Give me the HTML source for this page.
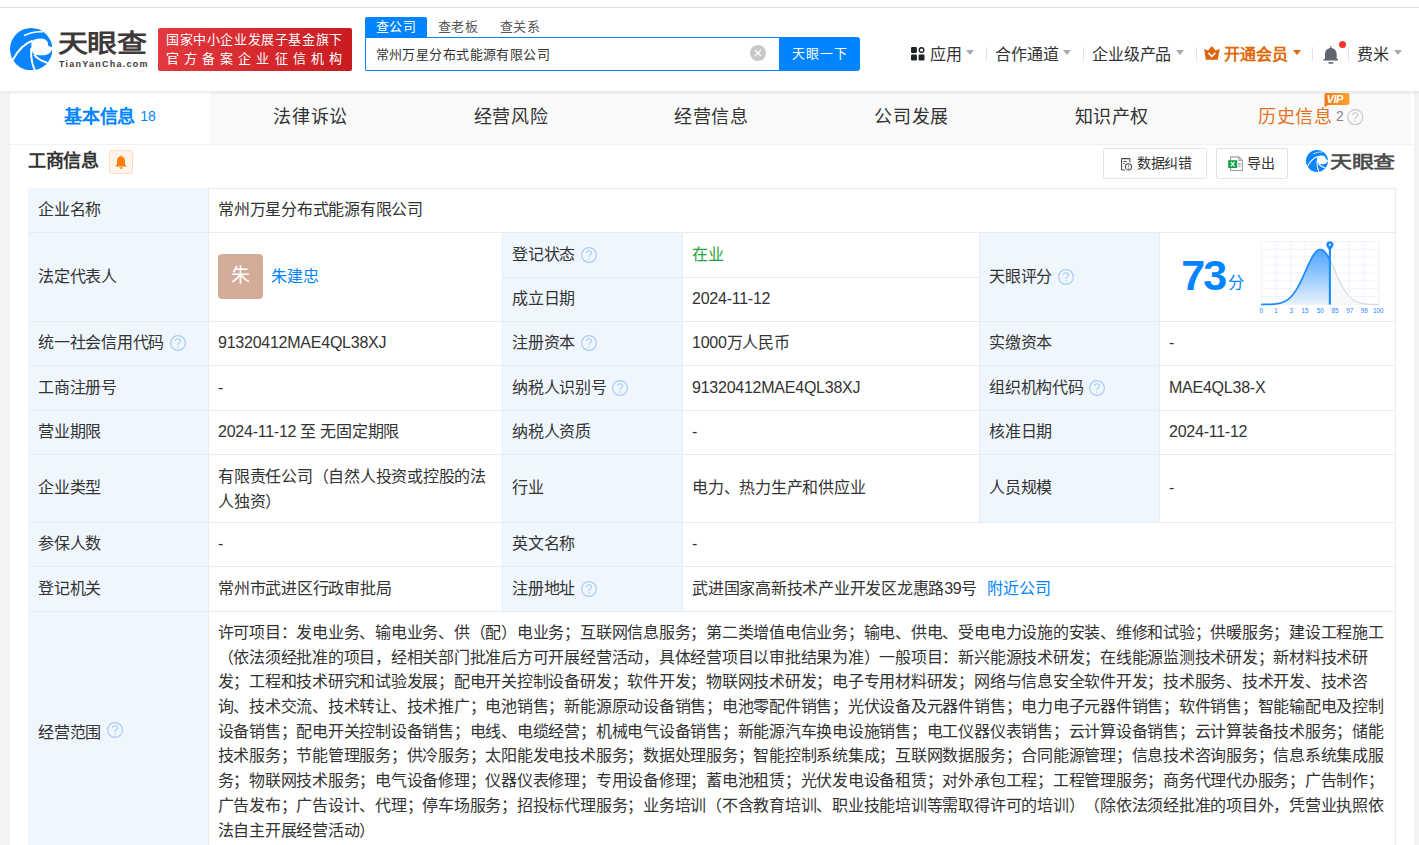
<!DOCTYPE html>
<html lang="zh-CN"><head><meta charset="utf-8">
<style>
*{box-sizing:border-box;margin:0;padding:0}
html,body{text-spacing-trim:space-all;width:1419px;height:845px;overflow:hidden;background:#f4f4f4;font-family:"Liberation Sans",sans-serif;color:#333}
.abs{position:absolute}
#top{position:absolute;left:0;top:0;width:1419px;height:8px;background:#fff;border-bottom:1px solid #e3e3e3}
#hdr{position:absolute;left:0;top:8px;width:1419px;height:83px;background:#fff;box-shadow:0 1px 4px rgba(0,0,0,.06);z-index:2}
#card{position:absolute;left:10px;top:91px;width:1404px;height:800px;background:#fff;box-shadow:0 0 1px rgba(0,0,0,.12)}
#tabs{position:absolute;left:10px;top:91px;width:1401px;height:53px;background:#f9f9f9}
.tab{position:absolute;top:0;height:53px;width:200.3px;text-align:center;font-size:19px;letter-spacing:-0.3px;line-height:51px;color:#333}
.cell{position:absolute}
.vl{position:absolute;width:1px;background:#e3edf6}
.hl{position:absolute;height:1px;background:#e3edf6}
.ci{position:absolute;left:0;top:0;right:0;bottom:0;display:flex;align-items:center;padding-bottom:0;font-size:16px;line-height:20px;letter-spacing:-0.24px;color:#333}
.scope{position:absolute;white-space:nowrap;overflow:hidden;padding:10px 10px 0 9.5px;font-size:16px;letter-spacing:-0.24px;line-height:24.68px;color:#333}
.qi{display:inline-block;width:16px;height:16px;margin-left:5.5px;position:relative;top:0}
.lk{color:#0084ff}
.av{display:inline-block;width:45px;height:45px;border-radius:4px;background:#d3ab99;color:#fff;text-align:center;line-height:44px;font-size:19px}
</style></head><body>
<div id="top"></div>
<div id="hdr"></div>

<div class="abs" style="left:9.8px;top:27.8px;width:42.4px;height:42.4px;z-index:3">
<svg width="42.4" height="42.4" viewBox="0 0 100 100">
<circle cx="50" cy="50" r="50" fill="#0a84ff"/>
<path d="M51,31 C60,24 74,23 83,27 C89,31 91,36 89,41 L100,46 C99,56 92,62 84,63.5 C75,65 64,65 57,62 C52,58 50,52 50,45 Z" fill="#fff"/>
<path d="M6,76 C18,54 34,36 53,30" stroke="#fff" stroke-width="4.6" fill="none"/>
<path d="M50,48 C49,70 52,86 59,100" stroke="#fff" stroke-width="4.6" fill="none"/>
<path d="M57,63 C64,72 76,79 88,82" stroke="#fff" stroke-width="4.8" fill="none"/>
<path d="M33,18 C46,11 62,8 78,9" stroke="#fff" stroke-width="3.2" fill="none"/>
</svg></div>
<div class="abs" style="left:58px;top:31px;font-size:30px;line-height:30px;font-weight:bold;color:#3f3a3a;letter-spacing:-0.6px;transform:scaleY(0.82);transform-origin:0 0;z-index:3">天眼查</div>
<div class="abs" style="left:59px;top:58.5px;font-size:9px;line-height:10px;font-weight:bold;color:#3f3a3a;letter-spacing:1.25px;z-index:3">TianYanCha.com</div>
<div class="abs" style="left:158px;top:28px;width:194px;height:43px;border-radius:2px;background:linear-gradient(100deg,#e3393f,#c91b1f);z-index:3"></div>
<div class="abs" style="left:166px;top:33.2px;font-size:13px;line-height:13px;color:#fff;letter-spacing:0.6px;z-index:3">国家中小企业发展子基金旗下</div>
<div class="abs" style="left:166px;top:52px;font-size:13px;line-height:13px;color:#fff;letter-spacing:5.1px;z-index:3">官方备案企业征信机构</div>
<div class="abs" style="left:365px;top:17px;width:62px;height:21px;border-radius:2px 2px 0 0;background:#0084ff;z-index:3"></div>
<div class="abs" style="left:375.5px;top:20.4px;font-size:13px;line-height:13px;color:#fff;letter-spacing:0.5px;z-index:3">查公司</div>
<div class="abs" style="left:437.5px;top:20.4px;font-size:13px;line-height:13px;color:#555;letter-spacing:0.5px;z-index:3">查老板</div>
<div class="abs" style="left:499.5px;top:20.4px;font-size:13px;line-height:13px;color:#555;letter-spacing:0.5px;z-index:3">查关系</div>
<div class="abs" style="left:365px;top:37px;width:416px;height:34px;border:1px solid #0084ff;border-radius:0 0 0 2px;background:#fff;z-index:3"></div>
<div class="abs" style="left:375.5px;top:47.5px;font-size:13px;line-height:13px;color:#333;letter-spacing:0.44px;z-index:3">常州万星分布式能源有限公司</div>
<div class="abs" style="left:750px;top:45px;width:16px;height:16px;border-radius:50%;background:#c8c8c8;z-index:3">
<svg width="16" height="16" viewBox="0 0 16 16" style="position:absolute;left:0;top:0"><path d="M5,5 L11,11 M11,5 L5,11" stroke="#fff" stroke-width="1.3"/></svg></div>
<div class="abs" style="left:779px;top:37px;width:81px;height:34px;border-radius:0 3px 3px 0;background:#0084ff;z-index:3"></div>
<div class="abs" style="left:791.5px;top:46.6px;font-size:13px;line-height:13px;color:#fff;letter-spacing:1.1px;z-index:3">天眼一下</div>
<div class="abs" style="left:911px;top:47px;width:13.6px;height:13.6px;z-index:3"><svg width="13.6" height="13.6" viewBox="0 0 13.6 13.6"><rect x="0" y="0" width="5.9" height="5.9" rx="1.2" fill="#1d2128"/><rect x="0" y="7.6" width="5.9" height="5.9" rx="1.2" fill="#1d2128"/><rect x="7.6" y="7.6" width="5.9" height="5.9" rx="1.2" fill="#1d2128"/><circle cx="10.55" cy="2.95" r="2.25" fill="none" stroke="#1d2128" stroke-width="1.4"/></svg></div>
<div class="abs" style="left:930px;top:47px;font-size:16px;line-height:16px;color:#333;letter-spacing:-0.15px;z-index:3">应用</div><div class="abs" style="left:966px;top:50px;width:0;height:0;border-left:4.5px solid transparent;border-right:4.5px solid transparent;border-top:5px solid #aaa;z-index:3"></div><div class="abs" style="left:986px;top:47px;width:1px;height:14px;background:#e1e4e8;z-index:3"></div><div class="abs" style="left:995px;top:47px;font-size:16px;line-height:16px;color:#333;letter-spacing:-0.15px;z-index:3">合作通道</div><div class="abs" style="left:1063px;top:50px;width:0;height:0;border-left:4.5px solid transparent;border-right:4.5px solid transparent;border-top:5px solid #aaa;z-index:3"></div><div class="abs" style="left:1083px;top:47px;width:1px;height:14px;background:#e1e4e8;z-index:3"></div><div class="abs" style="left:1092px;top:47px;font-size:16px;line-height:16px;color:#333;letter-spacing:-0.15px;z-index:3">企业级产品</div><div class="abs" style="left:1176px;top:50px;width:0;height:0;border-left:4.5px solid transparent;border-right:4.5px solid transparent;border-top:5px solid #aaa;z-index:3"></div><div class="abs" style="left:1195.5px;top:47px;width:1px;height:14px;background:#e1e4e8;z-index:3"></div><div class="abs" style="left:1203.9px;top:46px;width:16px;height:14px;z-index:3"><svg width="16" height="14" viewBox="0 0 16 14"><path d="M0.2,3.1 L4,4.6 L7.8,0.1 L11.6,4.6 L15.7,3.1 L13.7,13.8 L1.8,13.8 Z" fill="#dc640c"/><path d="M4.4,6.8 L7.8,10.5 L11.4,6.8" stroke="#fff" stroke-width="1.6" fill="none"/></svg></div><div class="abs" style="left:1224px;top:47px;font-size:16px;line-height:16px;color:#e0690b;letter-spacing:-0.15px;font-weight:bold;z-index:3">开通会员</div><div class="abs" style="left:1292.5px;top:50px;width:0;height:0;border-left:4.5px solid transparent;border-right:4.5px solid transparent;border-top:5px solid #e0690b;z-index:3"></div><div class="abs" style="left:1312px;top:47px;width:1px;height:14px;background:#e1e4e8;z-index:3"></div><div class="abs" style="left:1322.5px;top:46px;width:15.5px;height:18px;z-index:3"><svg width="15.5" height="18" viewBox="0 0 15.5 18"><path d="M7.3,0 L8.4,0 L8.4,1.9 C11.5,2.3 13.7,4.8 13.7,8.2 L13.7,12.9 L15.3,12.9 L15.3,14.5 L0.3,14.5 L0.3,12.9 L2,12.9 L2,8.2 C2,4.8 4.2,2.3 7.3,1.9 Z" fill="#5f6670"/><rect x="5.5" y="16.1" width="4.7" height="1.6" fill="#5f6670"/></svg></div><div class="abs" style="left:1338.9px;top:40.8px;width:7px;height:7px;border-radius:50%;background:#ff3430;z-index:3"></div><div class="abs" style="left:1348px;top:47px;width:1px;height:14px;background:#e1e4e8;z-index:3"></div><div class="abs" style="left:1357px;top:47px;font-size:16px;line-height:16px;color:#333;letter-spacing:-0.15px;z-index:3">费米</div><div class="abs" style="left:1394px;top:50px;width:0;height:0;border-left:4.5px solid transparent;border-right:4.5px solid transparent;border-top:5px solid #aaa;z-index:3"></div>
<div id="card"></div>
<div id="tabs"></div>
<div class="abs" style="left:10px;top:91px;width:199.5px;height:53px;background:#fff"></div>
<div class="abs" style="left:10px;top:144px;width:1402px;height:1px;background:#f2f2f2"></div>
<div class="abs" style="left:10px;top:91px;width:1409px;height:4px;background:linear-gradient(rgba(0,0,0,0.045),rgba(0,0,0,0))"></div>
<div class="abs tt" style="left:64.3px;top:108.2px;font-size:18px;line-height:18px;font-weight:bold;letter-spacing:-0.3px;color:#0084ff">基本信息</div>
<div class="abs tt" style="left:140.3px;top:109px;font-size:14px;line-height:14px;color:#0084ff">18</div>
<div class="abs tt" style="left:273.45px;top:108.25px;font-size:18px;line-height:18px;letter-spacing:0.6px;color:#333">法律诉讼</div><div class="abs tt" style="left:473.75px;top:108.25px;font-size:18px;line-height:18px;letter-spacing:0.6px;color:#333">经营风险</div><div class="abs tt" style="left:674.05px;top:108.25px;font-size:18px;line-height:18px;letter-spacing:0.6px;color:#333">经营信息</div><div class="abs tt" style="left:874.35px;top:108.25px;font-size:18px;line-height:18px;letter-spacing:0.6px;color:#333">公司发展</div><div class="abs tt" style="left:1074.65px;top:108.25px;font-size:18px;line-height:18px;letter-spacing:0.6px;color:#333">知识产权</div>
<div class="abs tt" style="left:1258px;top:108.25px;font-size:18px;line-height:18px;letter-spacing:0.6px;color:#e5731b">历史信息</div>
<div class="abs tt" style="left:1336px;top:110px;font-size:13.8px;line-height:14px;color:#858585">2</div>
<svg class="abs" style="left:1347.3px;top:108.8px" width="16.4" height="16.4" viewBox="0 0 16 16"><circle cx="8" cy="8" r="7.4" fill="none" stroke="#c4cad0" stroke-width="1.2"/><path d="M5.5,6.1 C5.5,4.6 6.6,3.7 8,3.7 C9.4,3.7 10.5,4.6 10.5,5.9 C10.5,7.1 9.6,7.6 8.9,8.1 C8.2,8.6 8,9 8,9.9" fill="none" stroke="#c4cad0" stroke-width="1.1"/><circle cx="8" cy="12" r="0.75" fill="#c4cad0"/></svg>
<svg class="abs" style="left:1323.5px;top:92.8px" width="26" height="14.5" viewBox="0 0 26 14.5"><defs><linearGradient id="vg" x1="0" y1="0" x2="1" y2="0"><stop offset="0" stop-color="#f07910"/><stop offset="1" stop-color="#ffa335"/></linearGradient></defs><path d="M2,0 L23.5,0 Q25.5,0 25.5,2 L25.5,10 Q25.5,12 23.5,12 L4,12 L1,14.2 L0.5,12 L0.5,2 Q0.5,0 2,0 Z" fill="url(#vg)"/></svg>
<div class="abs" style="left:1326.5px;top:94px;font-size:11px;line-height:11px;font-weight:bold;font-style:italic;color:#fff;letter-spacing:-0.4px">VIP</div>

<div class="abs" style="left:28px;top:152px;font-size:18px;line-height:18px;font-weight:bold;color:#333;letter-spacing:-0.3px">工商信息</div>
<div class="abs" style="left:109px;top:149.5px;width:24px;height:24px;border:1px solid #ffdcc2;border-radius:3px;background:#fff4ea">
<svg width="22" height="22" viewBox="0 0 22 22" style="position:absolute;left:0;top:0"><path d="M11,4.6 C11.4,4.6 11.5,4.9 11.5,5.3 C13.8,5.8 15,7.6 15,10 L15,13.4 L16.4,14.7 L16.4,15.4 L5.6,15.4 L5.6,14.7 L7,13.4 L7,10 C7,7.6 8.2,5.8 10.5,5.3 C10.5,4.9 10.6,4.6 11,4.6 Z" fill="#ff7d0a"/><path d="M9.4,16.3 L12.6,16.3 C12.5,17.3 11.8,17.8 11,17.8 C10.2,17.8 9.5,17.3 9.4,16.3 Z" fill="#ff7d0a"/></svg></div>
<div class="abs" style="left:1103px;top:148px;width:104px;height:31px;border:1px solid #e3e3e3;border-radius:2px;background:#fff"></div>
<div class="abs" style="left:1121px;top:156.8px;width:11.5px;height:12.5px"><svg width="11.5" height="12.5" viewBox="0 0 11.5 12.5"><path d="M3.8,11.9 L1.1,11.9 C0.8,11.9 0.6,11.7 0.6,11.3 L0.6,1.1 C0.6,0.8 0.8,0.6 1.1,0.6 L8.4,0.6 C8.7,0.6 8.9,0.8 8.9,1.1 L8.9,4.2" fill="none" stroke="#444" stroke-width="1.05"/><path d="M2.4,3.5 L5.6,3.5 M2.4,5.5 L3.8,5.5" stroke="#444" stroke-width="1.05"/><circle cx="7.4" cy="8.8" r="3.1" fill="none" stroke="#444" stroke-width="1.05"/><path d="M7.4,7 L7.4,8.6" stroke="#444" stroke-width="0.9"/><circle cx="7.4" cy="10.1" r="0.55" fill="#444"/></svg></div>
<div class="abs" style="left:1137px;top:156px;font-size:14px;line-height:14px;color:#333;letter-spacing:-0.3px">数据纠错</div>
<div class="abs" style="left:1216px;top:148px;width:72px;height:31px;border:1px solid #e3e3e3;border-radius:2px;background:#fff"></div>
<div class="abs" style="left:1228px;top:155.8px;width:15.5px;height:15.5px"><svg width="15.5" height="15.5" viewBox="0 0 15.5 15.5"><path d="M2.6,0.9 L10.8,0.9 L14.4,4.5 L14.4,14.6 L2.6,14.6 Z" fill="#fff" stroke="#9ca2aa" stroke-width="1.1" stroke-linejoin="round"/><path d="M10.8,0.9 L10.8,4.5 L14.4,4.5" fill="none" stroke="#9ca2aa" stroke-width="1.1"/><rect x="10.2" y="6.6" width="2.6" height="2.9" fill="#b8bcc2"/><rect x="10.2" y="10.3" width="2.6" height="0.9" fill="#9ca2aa"/><rect x="0.2" y="4.2" width="9" height="7.9" fill="#13a048"/><path d="M2.9,5.9 L6.5,10.4 M6.5,5.9 L2.9,10.4" stroke="#fff" stroke-width="1.25"/></svg></div>
<div class="abs" style="left:1247px;top:156px;font-size:14px;line-height:14px;color:#333;letter-spacing:-0.3px">导出</div>
<div class="abs" style="left:1306px;top:150px;width:22px;height:22px">
<svg width="22" height="22" viewBox="0 0 100 100">
<circle cx="50" cy="50" r="50" fill="#0a84ff"/>
<path d="M51,31 C60,24 74,23 83,27 C89,31 91,36 89,41 L100,46 C99,56 92,62 84,63.5 C75,65 64,65 57,62 C52,58 50,52 50,45 Z" fill="#fff"/>
<path d="M6,76 C18,54 34,36 53,30" stroke="#fff" stroke-width="4.6" fill="none"/>
<path d="M50,48 C49,70 52,86 59,100" stroke="#fff" stroke-width="4.6" fill="none"/>
<path d="M57,63 C64,72 76,79 88,82" stroke="#fff" stroke-width="4.8" fill="none"/>
<path d="M33,18 C46,11 62,8 78,9" stroke="#fff" stroke-width="3.2" fill="none"/>
</svg></div>
<div class="abs" style="left:1330px;top:154px;font-size:22px;line-height:22px;font-weight:bold;color:#4c4c4c;letter-spacing:-0.3px;transform:scaleY(0.8);transform-origin:0 0">天眼查</div>

<div class="abs" style="left:1181.3px;top:254px;font-size:43px;line-height:43px;font-weight:bold;color:#0084ff;letter-spacing:-2px">73</div><div class="abs" style="left:1228px;top:275px;font-size:16px;line-height:16px;color:#0084ff">分</div><svg width="135" height="83" viewBox="0 0 135 83" style="position:absolute;left:1255px;top:235px"><defs><linearGradient id="gf" x1="0" y1="0" x2="0" y2="1"><stop offset="0" stop-color="#4da3ff"/><stop offset="1" stop-color="#e8f2fd"/></linearGradient></defs><line x1="6.40" y1="6.4" x2="6.40" y2="69.5" stroke="#edf3fa" stroke-width="1"/><line x1="21.07" y1="6.4" x2="21.07" y2="69.5" stroke="#edf3fa" stroke-width="1"/><line x1="35.75" y1="6.4" x2="35.75" y2="69.5" stroke="#edf3fa" stroke-width="1"/><line x1="50.42" y1="6.4" x2="50.42" y2="69.5" stroke="#edf3fa" stroke-width="1"/><line x1="65.10" y1="6.4" x2="65.10" y2="69.5" stroke="#edf3fa" stroke-width="1"/><line x1="79.78" y1="6.4" x2="79.78" y2="69.5" stroke="#edf3fa" stroke-width="1"/><line x1="94.45" y1="6.4" x2="94.45" y2="69.5" stroke="#edf3fa" stroke-width="1"/><line x1="109.12" y1="6.4" x2="109.12" y2="69.5" stroke="#edf3fa" stroke-width="1"/><line x1="123.80" y1="6.4" x2="123.80" y2="69.5" stroke="#edf3fa" stroke-width="1"/><line x1="6.4" y1="6.40" x2="123.8" y2="6.40" stroke="#edf3fa" stroke-width="1"/><line x1="6.4" y1="14.29" x2="123.8" y2="14.29" stroke="#edf3fa" stroke-width="1"/><line x1="6.4" y1="22.18" x2="123.8" y2="22.18" stroke="#edf3fa" stroke-width="1"/><line x1="6.4" y1="30.06" x2="123.8" y2="30.06" stroke="#edf3fa" stroke-width="1"/><line x1="6.4" y1="37.95" x2="123.8" y2="37.95" stroke="#edf3fa" stroke-width="1"/><line x1="6.4" y1="45.84" x2="123.8" y2="45.84" stroke="#edf3fa" stroke-width="1"/><line x1="6.4" y1="53.73" x2="123.8" y2="53.73" stroke="#edf3fa" stroke-width="1"/><line x1="6.4" y1="61.61" x2="123.8" y2="61.61" stroke="#edf3fa" stroke-width="1"/><line x1="6.4" y1="69.50" x2="123.8" y2="69.50" stroke="#edf3fa" stroke-width="1"/><polygon points="6.4,69.5 6.0,69.48 6.5,69.48 7.0,69.48 7.5,69.47 8.0,69.47 8.5,69.47 9.0,69.46 9.5,69.45 10.0,69.45 10.5,69.44 11.0,69.43 11.5,69.43 12.0,69.42 12.5,69.41 13.0,69.39 13.5,69.38 14.0,69.36 14.5,69.35 15.0,69.33 15.5,69.31 16.0,69.29 16.5,69.26 17.0,69.23 17.5,69.20 18.0,69.17 18.5,69.13 19.0,69.09 19.5,69.04 20.0,68.99 20.5,68.94 21.0,68.88 21.5,68.81 22.0,68.74 22.5,68.66 23.0,68.57 23.5,68.48 24.0,68.38 24.5,68.27 25.0,68.15 25.5,68.02 26.0,67.88 26.5,67.73 27.0,67.57 27.5,67.39 28.0,67.20 28.5,67.00 29.0,66.78 29.5,66.55 30.0,66.30 30.5,66.03 31.0,65.75 31.5,65.45 32.0,65.12 32.5,64.78 33.0,64.42 33.5,64.03 34.0,63.62 34.5,63.19 35.0,62.74 35.5,62.26 36.0,61.75 36.5,61.22 37.0,60.66 37.5,60.08 38.0,59.47 38.5,58.83 39.0,58.16 39.5,57.46 40.0,56.74 40.5,55.99 41.0,55.21 41.5,54.41 42.0,53.57 42.5,52.71 43.0,51.82 43.5,50.91 44.0,49.97 44.5,49.01 45.0,48.03 45.5,47.02 46.0,46.00 46.5,44.95 47.0,43.89 47.5,42.82 48.0,41.72 48.5,40.62 49.0,39.51 49.5,38.39 50.0,37.27 50.5,36.14 51.0,35.01 51.5,33.89 52.0,32.77 52.5,31.66 53.0,30.56 53.5,29.48 54.0,28.41 54.5,27.36 55.0,26.33 55.5,25.33 56.0,24.35 56.5,23.41 57.0,22.50 57.5,21.63 58.0,20.80 58.5,20.01 59.0,19.26 59.5,18.57 60.0,17.92 60.5,17.32 61.0,16.77 61.5,16.28 62.0,15.85 62.5,15.48 63.0,15.16 63.5,14.91 64.0,14.71 64.5,14.58 65.0,14.51 65.5,14.51 66.0,14.56 66.5,14.68 67.0,14.86 67.5,15.10 68.0,15.41 68.5,15.77 69.0,16.19 69.5,16.67 70.0,17.20 70.5,17.79 71.0,18.43 71.5,19.12 72.0,19.86 72.5,20.64 73.0,21.46 73.5,22.33 74.0,23.23 74.5,24.16 74.9,69.5" fill="url(#gf)"/><polygon points="74.9,69.5 74.5,24.16 75.0,25.13 75.5,26.13 76.0,27.15 76.5,28.19 77.0,29.26 77.5,30.34 78.0,31.44 78.5,32.55 79.0,33.67 79.5,34.79 80.0,35.92 80.5,37.04 81.0,38.17 81.5,39.29 82.0,40.40 82.5,41.51 83.0,42.60 83.5,43.68 84.0,44.74 84.5,45.79 85.0,46.82 85.5,47.83 86.0,48.82 86.5,49.78 87.0,50.73 87.5,51.64 88.0,52.54 88.5,53.40 89.0,54.24 89.5,55.05 90.0,55.84 90.5,56.59 91.0,57.32 91.5,58.02 92.0,58.69 92.5,59.34 93.0,59.96 93.5,60.55 94.0,61.11 94.5,61.65 95.0,62.16 95.5,62.64 96.0,63.10 96.5,63.54 97.0,63.95 97.5,64.34 98.0,64.71 98.5,65.06 99.0,65.38 99.5,65.69 100.0,65.98 100.5,66.25 101.0,66.50 101.5,66.74 102.0,66.96 102.5,67.16 103.0,67.36 103.5,67.53 104.0,67.70 104.5,67.85 105.0,67.99 105.5,68.13 106.0,68.25 106.5,68.36 107.0,68.46 107.5,68.56 108.0,68.64 108.5,68.72 109.0,68.80 109.5,68.86 110.0,68.93 110.5,68.98 111.0,69.03 111.5,69.08 112.0,69.12 112.5,69.16 113.0,69.19 113.5,69.23 114.0,69.25 114.5,69.28 115.0,69.30 115.5,69.33 116.0,69.34 116.5,69.36 117.0,69.38 117.5,69.39 118.0,69.40 118.5,69.41 119.0,69.42 119.5,69.43 120.0,69.44 120.5,69.45 121.0,69.45 121.5,69.46 122.0,69.46 122.5,69.47 123.0,69.47 123.5,69.48 123.8,69.5" fill="#f7f8fa"/><polyline points="74.5,24.16 75.0,25.13 75.5,26.13 76.0,27.15 76.5,28.19 77.0,29.26 77.5,30.34 78.0,31.44 78.5,32.55 79.0,33.67 79.5,34.79 80.0,35.92 80.5,37.04 81.0,38.17 81.5,39.29 82.0,40.40 82.5,41.51 83.0,42.60 83.5,43.68 84.0,44.74 84.5,45.79 85.0,46.82 85.5,47.83 86.0,48.82 86.5,49.78 87.0,50.73 87.5,51.64 88.0,52.54 88.5,53.40 89.0,54.24 89.5,55.05 90.0,55.84 90.5,56.59 91.0,57.32 91.5,58.02 92.0,58.69 92.5,59.34 93.0,59.96 93.5,60.55 94.0,61.11 94.5,61.65 95.0,62.16 95.5,62.64 96.0,63.10 96.5,63.54 97.0,63.95 97.5,64.34 98.0,64.71 98.5,65.06 99.0,65.38 99.5,65.69 100.0,65.98 100.5,66.25 101.0,66.50 101.5,66.74 102.0,66.96 102.5,67.16 103.0,67.36 103.5,67.53 104.0,67.70 104.5,67.85 105.0,67.99 105.5,68.13 106.0,68.25 106.5,68.36 107.0,68.46 107.5,68.56 108.0,68.64 108.5,68.72 109.0,68.80 109.5,68.86 110.0,68.93 110.5,68.98 111.0,69.03 111.5,69.08 112.0,69.12 112.5,69.16 113.0,69.19 113.5,69.23 114.0,69.25 114.5,69.28 115.0,69.30 115.5,69.33 116.0,69.34 116.5,69.36 117.0,69.38 117.5,69.39 118.0,69.40 118.5,69.41 119.0,69.42 119.5,69.43 120.0,69.44 120.5,69.45 121.0,69.45 121.5,69.46 122.0,69.46 122.5,69.47 123.0,69.47 123.5,69.48" fill="none" stroke="#c3cbd4" stroke-width="1"/><polyline points="6.0,69.48 6.5,69.48 7.0,69.48 7.5,69.47 8.0,69.47 8.5,69.47 9.0,69.46 9.5,69.45 10.0,69.45 10.5,69.44 11.0,69.43 11.5,69.43 12.0,69.42 12.5,69.41 13.0,69.39 13.5,69.38 14.0,69.36 14.5,69.35 15.0,69.33 15.5,69.31 16.0,69.29 16.5,69.26 17.0,69.23 17.5,69.20 18.0,69.17 18.5,69.13 19.0,69.09 19.5,69.04 20.0,68.99 20.5,68.94 21.0,68.88 21.5,68.81 22.0,68.74 22.5,68.66 23.0,68.57 23.5,68.48 24.0,68.38 24.5,68.27 25.0,68.15 25.5,68.02 26.0,67.88 26.5,67.73 27.0,67.57 27.5,67.39 28.0,67.20 28.5,67.00 29.0,66.78 29.5,66.55 30.0,66.30 30.5,66.03 31.0,65.75 31.5,65.45 32.0,65.12 32.5,64.78 33.0,64.42 33.5,64.03 34.0,63.62 34.5,63.19 35.0,62.74 35.5,62.26 36.0,61.75 36.5,61.22 37.0,60.66 37.5,60.08 38.0,59.47 38.5,58.83 39.0,58.16 39.5,57.46 40.0,56.74 40.5,55.99 41.0,55.21 41.5,54.41 42.0,53.57 42.5,52.71 43.0,51.82 43.5,50.91 44.0,49.97 44.5,49.01 45.0,48.03 45.5,47.02 46.0,46.00 46.5,44.95 47.0,43.89 47.5,42.82 48.0,41.72 48.5,40.62 49.0,39.51 49.5,38.39 50.0,37.27 50.5,36.14 51.0,35.01 51.5,33.89 52.0,32.77 52.5,31.66 53.0,30.56 53.5,29.48 54.0,28.41 54.5,27.36 55.0,26.33 55.5,25.33 56.0,24.35 56.5,23.41 57.0,22.50 57.5,21.63 58.0,20.80 58.5,20.01 59.0,19.26 59.5,18.57 60.0,17.92 60.5,17.32 61.0,16.77 61.5,16.28 62.0,15.85 62.5,15.48 63.0,15.16 63.5,14.91 64.0,14.71 64.5,14.58 65.0,14.51 65.5,14.51 66.0,14.56 66.5,14.68 67.0,14.86 67.5,15.10 68.0,15.41 68.5,15.77 69.0,16.19 69.5,16.67 70.0,17.20 70.5,17.79 71.0,18.43 71.5,19.12 72.0,19.86 72.5,20.64 73.0,21.46 73.5,22.33 74.0,23.23 74.5,24.16" fill="none" stroke="#1a8cff" stroke-width="1.7"/><line x1="74.9" y1="14" x2="74.9" y2="69.5" stroke="#1a8cff" stroke-width="2.1"/><path d="M71.30000000000001,9.8 A3.6,3.6 0 1 1 78.5,9.8 C78.5,12 75.9,14 74.9,16 C73.9,14 71.30000000000001,12 71.30000000000001,9.8 Z" fill="#1a8cff"/><circle cx="74.9" cy="9.8" r="1.05" fill="#fff"/><text x="6.4" y="77.8" font-size="6.4" fill="#1f84ff" text-anchor="middle" font-family="Liberation Sans">0</text><text x="21.1" y="77.8" font-size="6.4" fill="#1f84ff" text-anchor="middle" font-family="Liberation Sans">1</text><text x="36.3" y="77.8" font-size="6.4" fill="#1f84ff" text-anchor="middle" font-family="Liberation Sans">3</text><text x="50.1" y="77.8" font-size="6.4" fill="#1f84ff" text-anchor="middle" font-family="Liberation Sans">15</text><text x="65.3" y="77.8" font-size="6.4" fill="#1f84ff" text-anchor="middle" font-family="Liberation Sans">50</text><text x="80.1" y="77.8" font-size="6.4" fill="#1f84ff" text-anchor="middle" font-family="Liberation Sans">85</text><text x="94.8" y="77.8" font-size="6.4" fill="#1f84ff" text-anchor="middle" font-family="Liberation Sans">97</text><text x="109.2" y="77.8" font-size="6.4" fill="#1f84ff" text-anchor="middle" font-family="Liberation Sans">99</text><text x="123.3" y="77.8" font-size="6.4" fill="#1f84ff" text-anchor="middle" font-family="Liberation Sans">100</text></svg>
<div class="abs" style="left:28px;top:188px;width:1367px;height:1px;background:#e3edf6"></div>
<div class="abs" style="left:28px;top:188px;width:1px;height:700px;background:#e3edf6"></div>
<div class="cell" style="left:28px;top:188px;width:180px;height:44px;background:#eff6fd;"><div class="ci" style="padding-left:10px"><span class="lt">企业名称</span></div></div>
<div class="cell" style="left:208px;top:188px;width:1187px;height:44px;"><div class="ci" style="padding-left:10px">常州万星分布式能源有限公司</div></div>
<div class="cell" style="left:28px;top:232px;width:180px;height:89px;background:#eff6fd;"><div class="ci" style="padding-left:10px"><span class="lt">法定代表人</span></div></div>
<div class="cell" style="left:208px;top:232px;width:294px;height:89px;"><div class="ci" style="padding-left:10px"><span class="av">朱</span><span class="lk" style="margin-left:8px">朱建忠</span></div></div>
<div class="cell" style="left:502px;top:232px;width:180px;height:45px;background:#eff6fd;"><div class="ci" style="padding-left:10px"><span class="lt">登记状态</span><svg class="qi" viewBox="0 0 16 16"><circle cx="8" cy="8" r="7.4" fill="none" stroke="#a9cdf0" stroke-width="1.2"/><path d="M5.5,6.1 C5.5,4.6 6.6,3.7 8,3.7 C9.4,3.7 10.5,4.6 10.5,5.9 C10.5,7.1 9.6,7.6 8.9,8.1 C8.2,8.6 8,9 8,9.9" fill="none" stroke="#a9cdf0" stroke-width="1.1"/><circle cx="8" cy="12" r="0.75" fill="#a9cdf0"/></svg></div></div>
<div class="cell" style="left:682px;top:232px;width:297px;height:45px;"><div class="ci" style="padding-left:10px"><span style="color:#27a13a">在业</span></div></div>
<div class="cell" style="left:502px;top:277px;width:180px;height:44px;background:#eff6fd;"><div class="ci" style="padding-left:10px"><span class="lt">成立日期</span></div></div>
<div class="cell" style="left:682px;top:277px;width:297px;height:44px;"><div class="ci" style="padding-left:10px">2024-11-12</div></div>
<div class="cell" style="left:979px;top:232px;width:180px;height:89px;background:#eff6fd;"><div class="ci" style="padding-left:10px"><span class="lt">天眼评分</span><svg class="qi" viewBox="0 0 16 16"><circle cx="8" cy="8" r="7.4" fill="none" stroke="#a9cdf0" stroke-width="1.2"/><path d="M5.5,6.1 C5.5,4.6 6.6,3.7 8,3.7 C9.4,3.7 10.5,4.6 10.5,5.9 C10.5,7.1 9.6,7.6 8.9,8.1 C8.2,8.6 8,9 8,9.9" fill="none" stroke="#a9cdf0" stroke-width="1.1"/><circle cx="8" cy="12" r="0.75" fill="#a9cdf0"/></svg></div></div>
<div class="cell" style="left:1159px;top:232px;width:236px;height:89px;"><div class="ci" style="padding-left:10px"></div></div>
<div class="cell" style="left:28px;top:321px;width:180px;height:44px;background:#eff6fd;"><div class="ci" style="padding-left:10px"><span class="lt">统一社会信用代码</span><svg class="qi" viewBox="0 0 16 16"><circle cx="8" cy="8" r="7.4" fill="none" stroke="#a9cdf0" stroke-width="1.2"/><path d="M5.5,6.1 C5.5,4.6 6.6,3.7 8,3.7 C9.4,3.7 10.5,4.6 10.5,5.9 C10.5,7.1 9.6,7.6 8.9,8.1 C8.2,8.6 8,9 8,9.9" fill="none" stroke="#a9cdf0" stroke-width="1.1"/><circle cx="8" cy="12" r="0.75" fill="#a9cdf0"/></svg></div></div>
<div class="cell" style="left:208px;top:321px;width:294px;height:44px;"><div class="ci" style="padding-left:10px">91320412MAE4QL38XJ</div></div>
<div class="cell" style="left:502px;top:321px;width:180px;height:44px;background:#eff6fd;"><div class="ci" style="padding-left:10px"><span class="lt">注册资本</span><svg class="qi" viewBox="0 0 16 16"><circle cx="8" cy="8" r="7.4" fill="none" stroke="#a9cdf0" stroke-width="1.2"/><path d="M5.5,6.1 C5.5,4.6 6.6,3.7 8,3.7 C9.4,3.7 10.5,4.6 10.5,5.9 C10.5,7.1 9.6,7.6 8.9,8.1 C8.2,8.6 8,9 8,9.9" fill="none" stroke="#a9cdf0" stroke-width="1.1"/><circle cx="8" cy="12" r="0.75" fill="#a9cdf0"/></svg></div></div>
<div class="cell" style="left:682px;top:321px;width:297px;height:44px;"><div class="ci" style="padding-left:10px">1000万人民币</div></div>
<div class="cell" style="left:979px;top:321px;width:180px;height:44px;background:#eff6fd;"><div class="ci" style="padding-left:10px"><span class="lt">实缴资本</span></div></div>
<div class="cell" style="left:1159px;top:321px;width:236px;height:44px;"><div class="ci" style="padding-left:10px">-</div></div>
<div class="cell" style="left:28px;top:365px;width:180px;height:45px;background:#eff6fd;"><div class="ci" style="padding-left:10px"><span class="lt">工商注册号</span></div></div>
<div class="cell" style="left:208px;top:365px;width:294px;height:45px;"><div class="ci" style="padding-left:10px">-</div></div>
<div class="cell" style="left:502px;top:365px;width:180px;height:45px;background:#eff6fd;"><div class="ci" style="padding-left:10px"><span class="lt">纳税人识别号</span><svg class="qi" viewBox="0 0 16 16"><circle cx="8" cy="8" r="7.4" fill="none" stroke="#a9cdf0" stroke-width="1.2"/><path d="M5.5,6.1 C5.5,4.6 6.6,3.7 8,3.7 C9.4,3.7 10.5,4.6 10.5,5.9 C10.5,7.1 9.6,7.6 8.9,8.1 C8.2,8.6 8,9 8,9.9" fill="none" stroke="#a9cdf0" stroke-width="1.1"/><circle cx="8" cy="12" r="0.75" fill="#a9cdf0"/></svg></div></div>
<div class="cell" style="left:682px;top:365px;width:297px;height:45px;"><div class="ci" style="padding-left:10px">91320412MAE4QL38XJ</div></div>
<div class="cell" style="left:979px;top:365px;width:180px;height:45px;background:#eff6fd;"><div class="ci" style="padding-left:10px"><span class="lt">组织机构代码</span><svg class="qi" viewBox="0 0 16 16"><circle cx="8" cy="8" r="7.4" fill="none" stroke="#a9cdf0" stroke-width="1.2"/><path d="M5.5,6.1 C5.5,4.6 6.6,3.7 8,3.7 C9.4,3.7 10.5,4.6 10.5,5.9 C10.5,7.1 9.6,7.6 8.9,8.1 C8.2,8.6 8,9 8,9.9" fill="none" stroke="#a9cdf0" stroke-width="1.1"/><circle cx="8" cy="12" r="0.75" fill="#a9cdf0"/></svg></div></div>
<div class="cell" style="left:1159px;top:365px;width:236px;height:45px;"><div class="ci" style="padding-left:10px">MAE4QL38-X</div></div>
<div class="cell" style="left:28px;top:410px;width:180px;height:44px;background:#eff6fd;"><div class="ci" style="padding-left:10px"><span class="lt">营业期限</span></div></div>
<div class="cell" style="left:208px;top:410px;width:294px;height:44px;"><div class="ci" style="padding-left:10px">2024-11-12 至 无固定期限</div></div>
<div class="cell" style="left:502px;top:410px;width:180px;height:44px;background:#eff6fd;"><div class="ci" style="padding-left:10px"><span class="lt">纳税人资质</span></div></div>
<div class="cell" style="left:682px;top:410px;width:297px;height:44px;"><div class="ci" style="padding-left:10px">-</div></div>
<div class="cell" style="left:979px;top:410px;width:180px;height:44px;background:#eff6fd;"><div class="ci" style="padding-left:10px"><span class="lt">核准日期</span></div></div>
<div class="cell" style="left:1159px;top:410px;width:236px;height:44px;"><div class="ci" style="padding-left:10px">2024-11-12</div></div>
<div class="cell" style="left:28px;top:454px;width:180px;height:68px;background:#eff6fd;"><div class="ci" style="padding-left:10px"><span class="lt">企业类型</span></div></div>
<div class="cell" style="left:208px;top:454px;width:294px;height:68px;"><div class="ci" style="padding-left:10px"><div style="line-height:24.68px;position:relative;top:1.5px">有限责任公司（自然人投资或控股的法<br>人独资）</div></div></div>
<div class="cell" style="left:502px;top:454px;width:180px;height:68px;background:#eff6fd;"><div class="ci" style="padding-left:10px"><span class="lt">行业</span></div></div>
<div class="cell" style="left:682px;top:454px;width:297px;height:68px;"><div class="ci" style="padding-left:10px">电力、热力生产和供应业</div></div>
<div class="cell" style="left:979px;top:454px;width:180px;height:68px;background:#eff6fd;"><div class="ci" style="padding-left:10px"><span class="lt">人员规模</span></div></div>
<div class="cell" style="left:1159px;top:454px;width:236px;height:68px;"><div class="ci" style="padding-left:10px">-</div></div>
<div class="cell" style="left:28px;top:522px;width:180px;height:44px;background:#eff6fd;"><div class="ci" style="padding-left:10px"><span class="lt">参保人数</span></div></div>
<div class="cell" style="left:208px;top:522px;width:294px;height:44px;"><div class="ci" style="padding-left:10px">-</div></div>
<div class="cell" style="left:502px;top:522px;width:180px;height:44px;background:#eff6fd;"><div class="ci" style="padding-left:10px"><span class="lt">英文名称</span></div></div>
<div class="cell" style="left:682px;top:522px;width:713px;height:44px;"><div class="ci" style="padding-left:10px">-</div></div>
<div class="cell" style="left:28px;top:566px;width:180px;height:45px;background:#eff6fd;"><div class="ci" style="padding-left:10px"><span class="lt">登记机关</span></div></div>
<div class="cell" style="left:208px;top:566px;width:294px;height:45px;"><div class="ci" style="padding-left:10px">常州市武进区行政审批局</div></div>
<div class="cell" style="left:502px;top:566px;width:180px;height:45px;background:#eff6fd;"><div class="ci" style="padding-left:10px"><span class="lt">注册地址</span><svg class="qi" viewBox="0 0 16 16"><circle cx="8" cy="8" r="7.4" fill="none" stroke="#a9cdf0" stroke-width="1.2"/><path d="M5.5,6.1 C5.5,4.6 6.6,3.7 8,3.7 C9.4,3.7 10.5,4.6 10.5,5.9 C10.5,7.1 9.6,7.6 8.9,8.1 C8.2,8.6 8,9 8,9.9" fill="none" stroke="#a9cdf0" stroke-width="1.1"/><circle cx="8" cy="12" r="0.75" fill="#a9cdf0"/></svg></div></div>
<div class="cell" style="left:682px;top:566px;width:713px;height:45px;"><div class="ci" style="padding-left:10px">武进国家高新技术产业开发区龙惠路39号<span class="lk" style="margin-left:10px">附近公司</span></div></div>
<div class="cell" style="left:28px;top:611px;width:180px;height:249px;background:#eff6fd;"><div class="ci" style="padding-left:10px"><div style="position:absolute;left:10px;top:110.5px"><span class="lt">经营范围</span><svg class="qi" viewBox="0 0 16 16"><circle cx="8" cy="8" r="7.4" fill="none" stroke="#a9cdf0" stroke-width="1.2"/><path d="M5.5,6.1 C5.5,4.6 6.6,3.7 8,3.7 C9.4,3.7 10.5,4.6 10.5,5.9 C10.5,7.1 9.6,7.6 8.9,8.1 C8.2,8.6 8,9 8,9.9" fill="none" stroke="#a9cdf0" stroke-width="1.1"/><circle cx="8" cy="12" r="0.75" fill="#a9cdf0"/></svg></div></div></div>
<div class="scope" style="left:208px;top:611px;width:1187px;height:249px">许可项目：发电业务、输电业务、供（配）电业务；互联网信息服务；第二类增值电信业务；输电、供电、受电电力设施的安装、维修和试验；供暖服务；建设工程施工<br>（依法须经批准的项目，经相关部门批准后方可开展经营活动，具体经营项目以审批结果为准）一般项目：新兴能源技术研发；在线能源监测技术研发；新材料技术研<br>发；工程和技术研究和试验发展；配电开关控制设备研发；软件开发；物联网技术研发；电子专用材料研发；网络与信息安全软件开发；技术服务、技术开发、技术咨<br>询、技术交流、技术转让、技术推广；电池销售；新能源原动设备销售；电池零配件销售；光伏设备及元器件销售；电力电子元器件销售；软件销售；智能输配电及控制<br>设备销售；配电开关控制设备销售；电线、电缆经营；机械电气设备销售；新能源汽车换电设施销售；电工仪器仪表销售；云计算设备销售；云计算装备技术服务；储能<br>技术服务；节能管理服务；供冷服务；太阳能发电技术服务；数据处理服务；智能控制系统集成；互联网数据服务；合同能源管理；信息技术咨询服务；信息系统集成服<br>务；物联网技术服务；电气设备修理；仪器仪表修理；专用设备修理；蓄电池租赁；光伏发电设备租赁；对外承包工程；工程管理服务；商务代理代办服务；广告制作；<br>广告发布；广告设计、代理；停车场服务；招投标代理服务；业务培训（不含教育培训、职业技能培训等需取得许可的培训）（除依法须经批准的项目外，凭营业执照依<br>法自主开展经营活动）</div><div class="vl" style="left:208px;top:188px;height:45px"></div><div class="hl" style="left:28px;top:232px;width:181px"></div>
<div class="vl" style="left:1395px;top:188px;height:45px"></div><div class="hl" style="left:208px;top:232px;width:1188px"></div>
<div class="vl" style="left:208px;top:232px;height:90px"></div><div class="hl" style="left:28px;top:321px;width:181px"></div>
<div class="vl" style="left:502px;top:232px;height:90px"></div><div class="hl" style="left:208px;top:321px;width:295px"></div>
<div class="vl" style="left:682px;top:232px;height:46px"></div><div class="hl" style="left:502px;top:277px;width:181px"></div>
<div class="vl" style="left:979px;top:232px;height:46px"></div><div class="hl" style="left:682px;top:277px;width:298px"></div>
<div class="vl" style="left:682px;top:277px;height:45px"></div><div class="hl" style="left:502px;top:321px;width:181px"></div>
<div class="vl" style="left:979px;top:277px;height:45px"></div><div class="hl" style="left:682px;top:321px;width:298px"></div>
<div class="vl" style="left:1159px;top:232px;height:90px"></div><div class="hl" style="left:979px;top:321px;width:181px"></div>
<div class="vl" style="left:1395px;top:232px;height:90px"></div><div class="hl" style="left:1159px;top:321px;width:237px"></div>
<div class="vl" style="left:208px;top:321px;height:45px"></div><div class="hl" style="left:28px;top:365px;width:181px"></div>
<div class="vl" style="left:502px;top:321px;height:45px"></div><div class="hl" style="left:208px;top:365px;width:295px"></div>
<div class="vl" style="left:682px;top:321px;height:45px"></div><div class="hl" style="left:502px;top:365px;width:181px"></div>
<div class="vl" style="left:979px;top:321px;height:45px"></div><div class="hl" style="left:682px;top:365px;width:298px"></div>
<div class="vl" style="left:1159px;top:321px;height:45px"></div><div class="hl" style="left:979px;top:365px;width:181px"></div>
<div class="vl" style="left:1395px;top:321px;height:45px"></div><div class="hl" style="left:1159px;top:365px;width:237px"></div>
<div class="vl" style="left:208px;top:365px;height:46px"></div><div class="hl" style="left:28px;top:410px;width:181px"></div>
<div class="vl" style="left:502px;top:365px;height:46px"></div><div class="hl" style="left:208px;top:410px;width:295px"></div>
<div class="vl" style="left:682px;top:365px;height:46px"></div><div class="hl" style="left:502px;top:410px;width:181px"></div>
<div class="vl" style="left:979px;top:365px;height:46px"></div><div class="hl" style="left:682px;top:410px;width:298px"></div>
<div class="vl" style="left:1159px;top:365px;height:46px"></div><div class="hl" style="left:979px;top:410px;width:181px"></div>
<div class="vl" style="left:1395px;top:365px;height:46px"></div><div class="hl" style="left:1159px;top:410px;width:237px"></div>
<div class="vl" style="left:208px;top:410px;height:45px"></div><div class="hl" style="left:28px;top:454px;width:181px"></div>
<div class="vl" style="left:502px;top:410px;height:45px"></div><div class="hl" style="left:208px;top:454px;width:295px"></div>
<div class="vl" style="left:682px;top:410px;height:45px"></div><div class="hl" style="left:502px;top:454px;width:181px"></div>
<div class="vl" style="left:979px;top:410px;height:45px"></div><div class="hl" style="left:682px;top:454px;width:298px"></div>
<div class="vl" style="left:1159px;top:410px;height:45px"></div><div class="hl" style="left:979px;top:454px;width:181px"></div>
<div class="vl" style="left:1395px;top:410px;height:45px"></div><div class="hl" style="left:1159px;top:454px;width:237px"></div>
<div class="vl" style="left:208px;top:454px;height:69px"></div><div class="hl" style="left:28px;top:522px;width:181px"></div>
<div class="vl" style="left:502px;top:454px;height:69px"></div><div class="hl" style="left:208px;top:522px;width:295px"></div>
<div class="vl" style="left:682px;top:454px;height:69px"></div><div class="hl" style="left:502px;top:522px;width:181px"></div>
<div class="vl" style="left:979px;top:454px;height:69px"></div><div class="hl" style="left:682px;top:522px;width:298px"></div>
<div class="vl" style="left:1159px;top:454px;height:69px"></div><div class="hl" style="left:979px;top:522px;width:181px"></div>
<div class="vl" style="left:1395px;top:454px;height:69px"></div><div class="hl" style="left:1159px;top:522px;width:237px"></div>
<div class="vl" style="left:208px;top:522px;height:45px"></div><div class="hl" style="left:28px;top:566px;width:181px"></div>
<div class="vl" style="left:502px;top:522px;height:45px"></div><div class="hl" style="left:208px;top:566px;width:295px"></div>
<div class="vl" style="left:682px;top:522px;height:45px"></div><div class="hl" style="left:502px;top:566px;width:181px"></div>
<div class="vl" style="left:1395px;top:522px;height:45px"></div><div class="hl" style="left:682px;top:566px;width:714px"></div>
<div class="vl" style="left:208px;top:566px;height:46px"></div><div class="hl" style="left:28px;top:611px;width:181px"></div>
<div class="vl" style="left:502px;top:566px;height:46px"></div><div class="hl" style="left:208px;top:611px;width:295px"></div>
<div class="vl" style="left:682px;top:566px;height:46px"></div><div class="hl" style="left:502px;top:611px;width:181px"></div>
<div class="vl" style="left:1395px;top:566px;height:46px"></div><div class="hl" style="left:682px;top:611px;width:714px"></div>
<div class="vl" style="left:208px;top:611px;height:250px"></div><div class="hl" style="left:28px;top:860px;width:181px"></div>
<div class="vl" style="left:1395px;top:611px;height:249px"></div>
</body></html>
